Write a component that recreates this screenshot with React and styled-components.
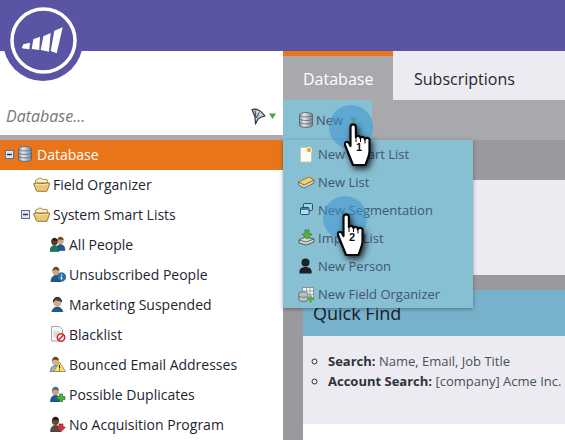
import React from "react";
import styled, { createGlobalStyle } from "styled-components";

const Global = createGlobalStyle`
  html, body { margin: 0; padding: 0; background: #fff; }
  body { width: 565px; height: 440px; overflow: hidden; font-family: "Open Sans", "Liberation Sans", sans-serif; }
  * { box-sizing: border-box; }
`;

const Page = styled.div`
  position: relative;
  width: 565px;
  height: 440px;
  overflow: hidden;
  display: flex;
  flex-direction: column;
`;
const Header = styled.header`
  height: 51px;
  flex: none;
  background: #5a54a4;
`;
const LogoBadge = styled.svg`
  position: absolute;
  left: 3px;
  top: 0;
`;
const Body = styled.div`
  flex: 1;
  display: flex;
  min-height: 0;
`;
const Sidebar = styled.aside`
  width: 283px;
  flex: none;
  display: flex;
  flex-direction: column;
`;
const SearchRow = styled.div`
  height: 89px;
  flex: none;
  display: flex;
  align-items: flex-end;
  padding: 0 7px 8px 6px;
  border-bottom: 5px solid #acabb0;
`;
const Placeholder = styled.span`
  flex: 1;
  font-size: 16px;
  line-height: 22px;
  font-style: italic;
  color: #74777d;
`;
const FilterTools = styled.span`
  display: flex;
  align-items: center;
  gap: 3px;
  height: 22px;
`;
const TreeRow = styled.div`
  height: 30px;
  display: flex;
  align-items: center;
  padding: 0 0 2px ${(p) => p.$indent}px;
  font-size: 14px;
  color: ${(p) => (p.$active ? "#fff" : "#1d2530")};
  background: ${(p) => (p.$active ? "#e8751a" : "transparent")};
`;
const RowIcon = styled.svg`
  flex: none;
  margin-right: ${(p) => p.$gap ?? 4}px;
`;
const ArrowIcon = styled.svg`
  flex: none;
`;

const Main = styled.main`
  flex: 1;
  min-width: 0;
  display: flex;
  flex-direction: column;
`;
const Tabs = styled.nav`
  height: 49px;
  flex: none;
  display: flex;
  background: #ecebf1;
`;
const Tab = styled.div`
  width: ${(p) => (p.$active ? "110px" : "auto")};
  padding-left: ${(p) => (p.$active ? "20px" : "21px")};
  font-size: 16px;
  color: ${(p) => (p.$active ? "#fff" : "#1f2630")};
  background: ${(p) => (p.$active ? "#a9a8ad" : "transparent")};
  border-top: ${(p) => (p.$active ? "5px solid #e8751a" : "0")};
  line-height: ${(p) => (p.$active ? "46px" : "56px")};
`;
const Toolbar = styled.div`
  height: 40px;
  flex: none;
  background: #a9a8ad;
  display: flex;
`;
const NewButton = styled.div`
  width: 89px;
  display: flex;
  align-items: center;
  padding-left: 15px;
  font-size: 13px;
  color: #3f4f66;
  background: #87bfd3;
`;
const ButtonArrow = styled.span`
  display: flex;
  margin: 0 0 0 7px;
`;
const Content = styled.div`
  flex: 1;
  background: #9a999d;
  padding: 40px 0 0 20px;
  display: flex;
  flex-direction: column;
`;
const TopPanel = styled.div`
  height: 95px;
  flex: none;
  background: #ecebf1;
  margin-bottom: 15px;
`;
const Card = styled.section`
  flex: 1;
  display: flex;
  flex-direction: column;
  background: #fff;
`;
const CardTitle = styled.h2`
  margin: 0;
  height: 46px;
  flex: none;
  padding: 11px 0 0 10px;
  font-size: 18px;
  line-height: 24px;
  font-weight: 400;
  color: #16202b;
  background: #78b1cc;
`;
const CardBody = styled.ul`
  margin: 0;
  height: 88px;
  flex: none;
  padding: 15px 0 0 25px;
  background: #ecebf1;
  list-style: circle;
  font-size: 13px;
  line-height: 20px;
  color: #48505c;
  white-space: nowrap;
  li::marker { color: #333; }
  b { color: #2d333b; font-weight: 700; }
`;
const Menu = styled.div`
  position: absolute;
  left: 283px;
  top: 140px;
  width: 190px;
  height: 168px;
  background: #87bfd3;
  box-shadow: 0 1px 4px rgba(0, 0, 0, 0.35);
  z-index: 1;
`;
const MenuItem = styled.div`
  height: 28px;
  display: flex;
  align-items: center;
  padding-left: 15px;
  font-size: 13px;
  color: #44566f;
`;
const MenuIcon = styled.svg`
  flex: none;
  width: 20px;
  height: 18px;
`;
const Spot = styled.div`
  position: absolute;
  left: ${(p) => p.$x - 22}px;
  top: ${(p) => p.$y - 22}px;
  width: 44px;
  height: 44px;
  border-radius: 50%;
  background: rgba(62, 150, 210, 0.55);
  z-index: 2;
`;
const Hand = styled.div`
  position: absolute;
  left: ${(p) => p.$x}px;
  top: ${(p) => p.$y}px;
  width: 30px;
  height: 46px;
  z-index: 3;
  svg { filter: drop-shadow(2px 3px 3px rgba(0,0,0,.8)); display: block; }
`;
const HandNumber = styled.span`
  position: absolute;
  left: 10px;
  top: 17px;
  width: 10px;
  text-align: center;
  font: 700 11px/14px "Liberation Sans", sans-serif;
  color: #111;
`;

const DbIcon = ({ gap }) => (
  <RowIcon width="16" height="16" viewBox="0 0 16 16" $gap={gap}>
    <defs>
      <linearGradient id="dbg" x1="0" x2="1" y1="0" y2="0">
        <stop offset="0" stopColor="#8d99a3" />
        <stop offset=".35" stopColor="#e6ebee" />
        <stop offset="1" stopColor="#77838e" />
      </linearGradient>
    </defs>
    <path d="M1.500 3c0-3.200 13-3.200 13 0v10c0 3.200-13 3.200-13 0z" fill="url(#dbg)" stroke="#5e6a75" />
    <path d="M1.500 3c0 2.500 13 2.500 13 0M1.500 6.600c0 2.500 13 2.500 13 0M1.500 10c0 2.500 13 2.500 13 0" fill="none" stroke="#59646e" strokeWidth=".8" />
  </RowIcon>
);
const Toggle = ({ gap }) => (
  <RowIcon width="9" height="9" viewBox="0 0 9 9" $gap={gap}>
    <rect x=".5" y=".5" width="8" height="8" fill="#dfe6f0" stroke="#5b7190" />
    <path d="M2 4.500h5" stroke="#1f2f48" strokeWidth="1.400" />
  </RowIcon>
);
const Folder = () => (
  <RowIcon width="17" height="15" viewBox="0 0 17 15" $gap={3}>
    <path d="M2.500 6V3.500L7 .8l2.500 1.500 4.500.2 1 3.500z" fill="#fbeec4" stroke="#8f7434" strokeWidth=".8" />
    <path d="M.6 6.600c2-.8 4-.6 6 0l9.800-.6c.4 0 .4.400.3.800L14.200 13.800c-.1.300-.4.500-.7.500H4.200c-.4 0-.7-.2-.8-.5z" fill="#edc674" stroke="#8a6d2c" strokeWidth=".9" />
    <path d="M2 7.500c1.500-.3 3-.2 4.500.3L15 7.300" fill="none" stroke="#fbeec4" strokeWidth=".8" />
  </RowIcon>
);

const Person = ({ x = 3, y = 0, skin = "#cfa37e", hair = "#6d4a2c", body = "#1e5a92", s = 1.1 }) => (
  <g transform={`translate(${x} ${y}) scale(${s})`}>
    <path d="M0 14.500c0-4 2-6 4.500-6S9 10.500 9 14.500z" fill={body} stroke="#123a61" strokeWidth=".5" />
    <circle cx="4.500" cy="5" r="3.200" fill={skin} />
    <path d="M1.300 5c0-3 1.500-4.300 3.200-4.300S7.700 2 7.700 4C6 4 4 3.500 3 3.200 2.500 4 2 4.500 1.300 5z" fill={hair} />
  </g>
);
const PeopleIcon = ({ kind }) => (
  <RowIcon width="16" height="16" viewBox="0 0 16 16" $gap={3}>
    {kind === "all" && (
      <>
        <Person x={6} y={0} s={1} />
        <Person x={0} y={1} s={1} skin="#5a3a25" hair="#222" body="#167a4c" />
      </>
    )}
    {kind === "info" && (
      <>
        <Person x={1} />
        <circle cx="11.500" cy="11" r="4.300" fill="#2c6fa8" stroke="#16466f" strokeWidth=".6" />
        <path d="M11.500 8.400v1M11.500 10.400v3" stroke="#fff" strokeWidth="1.400" />
      </>
    )}
    {kind === "head" && (
      <>
        <Person x={1.500} s={1.300} skin="#d5aa84" hair="#444" />
        <path d="M3.500 6c0-6 8-6 8 0" fill="none" stroke="#222" strokeWidth="1" />
      </>
    )}
    {kind === "doc" && (
      <>
        <path d="M1.500.5h8l3 3V15h-11z" fill="#f5f5f5" stroke="#a5a8ad" />
        <path d="M3.500 6h6M3.500 8h5M3.500 10h4" stroke="#c2c4c8" />
        <circle cx="11" cy="11.500" r="3.700" fill="#fff" stroke="#d32b22" strokeWidth="1.600" />
        <path d="M8.500 14l5-5" stroke="#d32b22" strokeWidth="1.600" />
      </>
    )}
    {kind === "warn" && (
      <>
        <Person x={0.500} body="#9cb3cf" skin="#d8b18c" />
        <path d="M9.500 6l6 9.500H3.500z" fill="#f5e06a" stroke="#8c7a22" strokeWidth=".7" />
        <path d="M9.500 9v3.300M9.500 13.300v1" stroke="#222" strokeWidth="1" />
      </>
    )}
    {kind === "plus" && (
      <>
        <Person x={0.500} skin="#bfa48c" hair="#54697a" />
        <path d="M9.500 8h3v2.500H15v3h-2.500V16h-3v-2.500H7v-3h2.500z" fill="#4cae3b" stroke="#21701e" strokeWidth=".6" />
      </>
    )}
    {kind === "down" && (
      <>
        <Person x={0.500} skin="#6b4730" hair="#1d1613" body="#5c4a42" />
        <path d="M9 8h4v3h2.500L11 15.800 6.500 11H9z" fill="#d8303a" stroke="#8d1a20" strokeWidth=".6" />
      </>
    )}
  </RowIcon>
);

const Arrow = () => (
  <ArrowIcon width="7" height="6" viewBox="0 0 7 6">
    <path d="M0 .5h7L3.500 6z" fill="#4ca93f" />
  </ArrowIcon>
);

const HandArt = ({ n }) => (
  <Hand $x={n === 1 ? 344 : 337} $y={n === 1 ? 123 : 213}>
    <svg width="30" height="46" viewBox="0 0 30 46">
      <path
        d="M6.500 4a2.700 2.700 0 0 1 5.400 0V14a2.500 2.500 0 0 1 4.600 1 2.400 2.400 0 0 1 4.400 1.500 2.300 2.300 0 0 1 4.600 1.500V28C25.500 33 23 37 21.500 42H9L1 22C0 19.500 3 17.500 5 20L6.500 23Z"
        fill="#fff"
        stroke="#0a0a0a"
        strokeWidth="2.200"
        strokeLinejoin="round"
      />
      <path d="M12 14v5M16.500 15v4M21 16.500v4" stroke="#0a0a0a" strokeWidth="1" fill="none" />
    </svg>
    <HandNumber>{n}</HandNumber>
  </Hand>
);

const children = [
  ["all", "All People"],
  ["info", "Unsubscribed People"],
  ["head", "Marketing Suspended"],
  ["doc", "Blacklist"],
  ["warn", "Bounced Email Addresses"],
  ["plus", "Possible Duplicates"],
  ["down", "No Acquisition Program"],
];

const menuItems = [
  [
    "New Smart List",
    <>
      <path d="M2.500 2.500h9l2 2v12.500h-11z" fill="#fdfdf6" stroke="#bdbba8" strokeWidth=".7" />
      <circle cx="11" cy="5" r="2.700" fill="#f0a92c" stroke="#fff" strokeWidth=".8" />
    </>,
  ],
  [
    "New List",
    <>
      <path d="M.5 9L6 12l10-5v3L6 15 .5 12z" fill="#dfdac8" stroke="#555" strokeWidth=".8" />
      <path d="M.5 9L11 4l5 3L6 12z" fill="#f1cf74" stroke="#7f6a30" strokeWidth=".8" />
    </>,
  ],
  [
    "New Segmentation",
    <>
      <rect x="5.500" y="2.500" width="9" height="7" rx="1" fill="#9fd0e4" stroke="#1d4f80" />
      <rect x="2.500" y="6.500" width="8.500" height="7" rx="1" fill="#b4dcec" stroke="#1d4f80" />
      <path d="M3 8h7.500" stroke="#1d4f80" strokeWidth="1.400" />
    </>,
  ],
  [
    "Import List",
    <>
      <path d="M1 11l6-3 9 2v3l-8 3-7-2z" fill="#d4d7d3" stroke="#4e4e4e" strokeWidth=".9" />
      <path d="M1 11l7 2 8-3" fill="none" stroke="#4e4e4e" strokeWidth=".8" />
      <path d="M7 1h4v4h3l-5 5-5-5h3z" fill="#55b33f" stroke="#2b7a23" strokeWidth=".7" />
    </>,
  ],
  [
    "New Person",
    <>
      <circle cx="7.500" cy="5.500" r="4" fill="#1d2024" />
      <path d="M1.500 16.500c-.8-4.500 2-6.500 6-6.500s6.800 2 6 6.500z" fill="#1d2024" />
    </>,
  ],
  [
    "New Field Organizer",
    <>
      <path d="M4.500 2.500h11v10h-11z" fill="#f3f3f3" stroke="#777" strokeWidth=".7" />
      <path d="M8.500 2.500v10M12 2.500v10M4.500 6h11M4.500 9.500h11" stroke="#888" strokeWidth=".7" />
      <path d="M.8 8.500c0-2 9-2 9 0v6.500c0 2-9 2-9 0z" fill="#b7bec5" stroke="#555" strokeWidth=".7" />
      <path d="M.8 11c0 1.600 9 1.600 9 0" fill="none" stroke="#555" strokeWidth=".6" />
      <path d="M11.500 10.500h2.200v2.400H16v2.200h-2.300v2.400h-2.200v-2.400H9.200v-2.200h2.300z" fill="#4cae3b" />
    </>,
  ],
];

export default function App() {
  return (
    <Page>
      <Global />
      <Header />
      <LogoBadge width="80" height="81" viewBox="0 0 80 81">
        <circle cx="40" cy="41" r="40" fill="#5a54a4" />
        <circle cx="40.500" cy="40.500" r="31.500" fill="none" stroke="#fff" strokeWidth="3.500" />
        <path d="M20.300 44.300L27 42.700l-.7 6.600-7.600-1zM30.300 39.300L37 36.700l-.7 13.300-7.600-1zM40.300 36.300L47.700 33 46 51.700 37.700 50zM51.300 30.700L59.700 27.300 53.700 53.300 47.700 51z" fill="#fff" />
      </LogoBadge>
      <Body>
        <Sidebar>
          <SearchRow>
            <Placeholder>Database...</Placeholder>
            <FilterTools>
              <svg width="15" height="17" viewBox="0 0 15 17">
                <path d="M1 1.500c5-1.500 10 2 13 6.500-3 .5-5 1.500-7 3l-2.500 5L4 9z" fill="#c6d1da" stroke="#2a3848" strokeWidth="1.200" strokeLinejoin="round" />
                <path d="M4 2.500L5 9.500M8 4.500L5.500 10" stroke="#2a3848" strokeWidth=".9" />
              </svg>
              <Arrow />
            </FilterTools>
          </SearchRow>
          <TreeRow $active $indent={5}>
            <Toggle gap={3} />
            <DbIcon gap={4} />
            Database
          </TreeRow>
          <TreeRow $indent={33}>
            <Folder />
            Field Organizer
          </TreeRow>
          <TreeRow $indent={21}>
            <Toggle gap={3} />
            <Folder />
            System Smart Lists
          </TreeRow>
          {children.map(([kind, label]) => (
            <TreeRow key={label} $indent={50}>
              <PeopleIcon kind={kind} />
              {label}
            </TreeRow>
          ))}
        </Sidebar>
        <Main>
          <Tabs>
            <Tab $active>Database</Tab>
            <Tab>Subscriptions</Tab>
          </Tabs>
          <Toolbar>
            <NewButton>
              <DbIcon gap={2} />
              New
              <ButtonArrow>
                <Arrow />
              </ButtonArrow>
            </NewButton>
          </Toolbar>
          <Content>
            <TopPanel />
            <Card>
              <CardTitle>Quick Find</CardTitle>
              <CardBody>
                <li>
                  <b>Search:</b> Name, Email, Job Title
                </li>
                <li>
                  <b>Account Search:</b> [company] Acme Inc.
                </li>
              </CardBody>
            </Card>
          </Content>
        </Main>
      </Body>
      <Menu>
        {menuItems.map(([label, art]) => (
          <MenuItem key={label}>
            <MenuIcon viewBox="0 0 20 18">{art}</MenuIcon>
            {label}
          </MenuItem>
        ))}
      </Menu>
      <Spot $x={351} $y={127} />
      <Spot $x={345} $y={218} />
      <HandArt n={1} />
      <HandArt n={2} />
    </Page>
  );
}
